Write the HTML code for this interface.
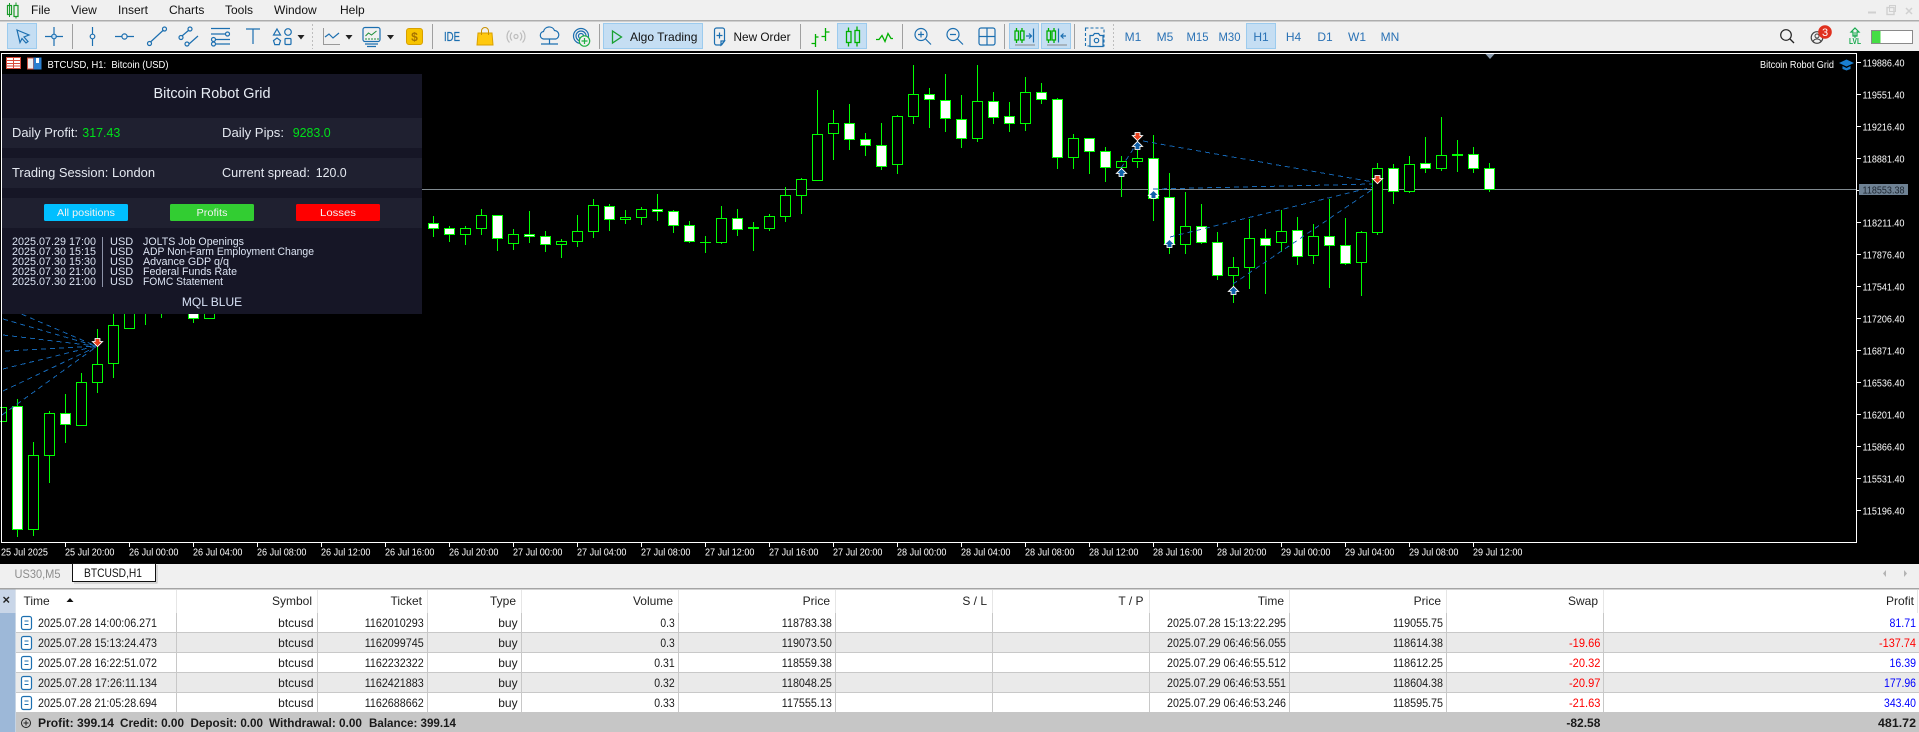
<!DOCTYPE html>
<html lang="en">
<head>
<meta charset="utf-8">
<title>BTCUSD, H1</title>
<style>
html,body{margin:0;padding:0;background:#f0f0f0;width:1919px;height:732px;overflow:hidden}
svg{display:block;font-family:"Liberation Sans",sans-serif}
.m{font-size:12px;fill:#111}
.tf{font-size:12px;fill:#2a72b5;text-anchor:middle}
.ax{font-size:10px;fill:#fff}
.tx{font-size:10px;fill:#fff}
.p{font-size:13px;fill:#e4e8f0}
.g{font-size:13px;fill:#00e01a}
.n{font-size:11px;fill:#dbe3f2}
.b{font-size:10.5px;fill:#f2f2f2;text-anchor:middle}
.h{font-size:12px;fill:#222;text-anchor:end}
.w{font-size:12px;fill:#1a1a1a;text-anchor:end}
.d{font-size:12px;fill:#1a1a1a;text-anchor:end}
.l{font-size:12px;fill:#1a1a1a}
.r{font-size:12px;fill:#f00;text-anchor:end}
.u{font-size:12px;fill:#00f;text-anchor:end}
.f{font-size:12px;font-weight:bold;fill:#1a1a1a}
.fe{font-size:12px;font-weight:bold;fill:#1a1a1a;text-anchor:end}
.i{fill:none;stroke:#1c6fb0;stroke-width:1.2}
.s{stroke:#a0a0a0;stroke-width:1}
.k{fill:#222}
.v{fill:none;stroke:#00b000;stroke-width:1.3}
.mk{paint-order:stroke;stroke:#fff;stroke-width:1.8;stroke-linejoin:miter}
</style>
</head>
<body>
<svg width="1919" height="732" viewBox="0 0 1919 732" xmlns="http://www.w3.org/2000/svg">
<defs>
<g id="dn"><path class="mk" d="M0 4L4 0H2V-3H-2V0H-4Z" fill="#e8411e"/></g>
<g id="up"><path class="mk" d="M0 -4L4 0H2V3H-2V0H-4Z" fill="#0f5fa8"/></g>
<g id="doc"><rect x="21.5" y="0" width="10" height="13" rx="2" fill="#fff" stroke="#1c6fb0" stroke-width="1.2"/><path d="M24.5 4.5h4M24.5 8h4" stroke="#1c6fb0"/></g>
</defs>
<rect width="1919" height="732" fill="#f0f0f0"/>

<!-- menu -->
<path d="M9.5 6v10M9.5 6" stroke="#1a9a2a"/><rect x="7.5" y="5.5" width="4" height="9" fill="none" stroke="#1a9a2a" stroke-width="1.2"/><rect x="14" y="5.5" width="4" height="11" fill="none" stroke="#1a9a2a" stroke-width="1.2"/><path d="M9.5 3v2.5M9.5 14.5V17M16 2.5v3M16 16.5v2" stroke="#1a9a2a"/>
<text class="m" x="31" y="14">File</text>
<text class="m" x="71" y="14">View</text>
<text class="m" x="118" y="14">Insert</text>
<text class="m" x="169" y="14">Charts</text>
<text class="m" x="225" y="14">Tools</text>
<text class="m" x="274" y="14">Window</text>
<text class="m" x="340" y="14">Help</text>
<path d="M1868 12.5h8" stroke="#d0d0d0" stroke-width="2"/><rect x="1887" y="7.5" width="7" height="7" fill="none" stroke="#d0d0d0" stroke-width="1.4"/><rect x="1889.5" y="5.5" width="6" height="6" fill="none" stroke="#d0d0d0"/><path d="M1906 8l6 6M1912 8l-6 6" stroke="#d0d0d0" stroke-width="1.5"/>
<rect x="0" y="20" width="1919" height="1.5" fill="#adadad"/>

<!-- active buttons -->
<g fill="#c5def3" stroke="#9ccbee">
<rect x="7.5" y="23.5" width="29" height="25"/>
<rect x="603.5" y="23.5" width="99" height="25"/>
<rect x="837.5" y="23.5" width="29" height="25"/>
<rect x="1009.5" y="23.5" width="29" height="25"/>
<rect x="1041.5" y="23.5" width="29" height="25"/>
<rect x="1246.5" y="23.5" width="29" height="25"/>
</g>

<!-- separators -->
<path class="s" d="M72.5 24v25M432.5 24v25M599.5 24v25M800.5 24v25M902.5 24v25M1004.5 24v25M1074.5 24v25"/>
<path d="M312.5 24v25M1113.5 24v25" stroke="#bdbdbd" stroke-dasharray="2 2"/>

<!-- drawing tools -->
<path class="i" d="M17 30l12 5-5 2 4 4.5-2 1.5-4-4.5-2 4z"/>
<path class="i" d="M54 27v19M45 36.5h18"/><circle cx="54" cy="36.5" r="2.3" fill="#c5def3" stroke="#1c6fb0" stroke-width="1.2"/>
<path class="i" d="M92.5 27v19"/><circle cx="92.5" cy="36.5" r="2.3" fill="#f0f0f0" stroke="#1c6fb0" stroke-width="1.2"/>
<path class="i" d="M115 36.5h19"/><circle cx="124.5" cy="36.5" r="2.6" fill="#f0f0f0" stroke="#1c6fb0" stroke-width="1.2"/>
<path class="i" d="M150.5 42l13-12"/><circle class="i" cx="149.5" cy="43.5" r="2"/><circle class="i" cx="164.5" cy="29" r="2"/>
<path class="i" d="M182 36l7-6M189 44l9-8"/><circle class="i" cx="181" cy="37.5" r="2"/><circle class="i" cx="190" cy="29" r="2"/><circle class="i" cx="187" cy="44" r="2"/>
<path class="i" d="M211 28.5h19M211 34h14M216 39.5h14M216 44h14"/><circle class="i" cx="227.5" cy="34" r="2"/><circle class="i" cx="213.5" cy="39.5" r="2"/><circle class="i" cx="213.5" cy="44" r="2"/>
<path class="i" d="M246 29h14M253 29v15"/>
<path class="i" d="M277 29l3.5 6h-7z"/><circle class="i" cx="288" cy="32" r="3.3"/><path class="i" d="M277 38l3.5 2.6-1.3 4h-4.4l-1.3-4z"/><rect class="i" x="285" y="38.5" width="6" height="6" rx="1"/>
<path class="k" d="M297.5 35h7l-3.5 4.5z"/>
<path d="M323.5 28v16.5H340" fill="none" stroke="#999"/><path class="i" d="M325 37l4-3 4 4 6-5"/>
<path class="k" d="M345.5 35h7l-3.5 4.5z"/>
<rect class="i" x="363" y="27.5" width="17" height="14" rx="2"/><path d="M365.5 36l3-3 3 2 5-4" fill="none" stroke="#1c8f3a"/><path d="M366 40v-2M369 40v-2M372 40v-2M375 40v-2M378 40v-2" stroke="#1c8f3a"/><path class="i" d="M365 44h13M367 46.5h9"/>
<path class="k" d="M387 35h7l-3.5 4.5z"/>
<rect x="406.5" y="28.5" width="16" height="16" rx="2.5" fill="#f7c400" stroke="#d8a000"/><text x="414.5" y="41" font-size="12" font-weight="bold" fill="#a87400" text-anchor="middle">$</text>
<text x="444" y="41" font-size="13" fill="#1c6fb0" stroke="#1c6fb0" stroke-width=".2" textLength="16" lengthAdjust="spacingAndGlyphs">IDE</text>
<path d="M478 33h14l1 12h-16z" fill="#ffc90e" stroke="#d8a000"/><path d="M481.5 35v-4a3.5 3.5 0 0 1 7 0v4" fill="none" stroke="#c89000"/>
<g fill="none" stroke="#bdbdbd" stroke-width="1.2"><circle cx="516" cy="36.5" r="2"/><path d="M512 32.5a5.5 5.5 0 0 0 0 8M520 32.5a5.5 5.5 0 0 1 0 8M509.5 30.5a8.5 8.5 0 0 0 0 12M522.5 30.5a8.5 8.5 0 0 1 0 12"/></g>
<path class="i" d="M543.5 39a3.8 3.8 0 0 1 0-7.5 5.8 5.8 0 0 1 11-1 4.4 4.4 0 0 1 1.5 8.5zM549.5 39v5M541 44h17"/>
<g class="i"><circle cx="581" cy="36" r="7.5"/><circle cx="581" cy="36" r="5"/><circle cx="581" cy="36" r="2.5"/></g><circle cx="584.5" cy="41" r="5.2" fill="#f0f0f0" stroke="#1fb042" stroke-width="1.2"/><path d="M584.5 38v6M581.5 41h6" stroke="#1fb042" stroke-width="1.2"/>
<path d="M612.5 31l9 6-9 6z" fill="none" stroke="#19a030" stroke-width="1.3"/>
<text class="m" x="630" y="41">Algo Trading</text>
<path class="i" d="M724.5 41v-11a2 2 0 0 0-2-2h-6a2 2 0 0 0-2 2v13a2 2 0 0 0 2 2h5zM724.5 41l-3.5 4v-4zM719.5 32.5v6M716.5 35.5h6"/>
<text class="m" x="733.5" y="41" textLength="57" lengthAdjust="spacingAndGlyphs">New Order</text>

<!-- chart type -->
<path class="v" d="M815.5 34v13M811.5 43.5h4M815.5 37h3M825.5 28v13M821.5 36.5h4M825.5 32h4"/>
<g class="v"><rect x="846.5" y="31.5" width="4.5" height="11"/><rect x="855" y="30.5" width="4.5" height="12"/><path d="M848.5 27.5v4M848.5 42.5v4M857 26.5v4M857 42.5v4"/></g>
<path class="v" d="M876 39.5h3l3-4 3 6 3-8 3 5h2"/>
<circle class="i" cx="921" cy="34.5" r="6"/><path class="i" d="M925.5 39l5.5 5.5M918 34.5h6M921 31.5v6"/>
<circle class="i" cx="953" cy="34.5" r="6"/><path class="i" d="M957.5 39l5.5 5.5M950 34.5h6"/>
<rect x="979" y="28" width="16" height="17" rx="2" class="i" stroke-width="1.6"/><path class="i" d="M987 28v17M979 36.5h16"/>
<g class="v"><rect x="1015" y="31" width="3.5" height="9"/><rect x="1020.5" y="31" width="3.5" height="9"/><path d="M1016.5 28v3M1016.5 40v3M1022 28v3M1022 40v3"/></g><path class="i" d="M1026 36h5M1029 33.5l2.5 2.5-2.5 2.5M1033.5 28.5v14"/><path d="M1015 45h20" stroke="#888"/>
<g class="v"><rect x="1047" y="31" width="3.5" height="9"/><rect x="1052" y="31" width="3.5" height="9"/><path d="M1048.5 28v3M1048.5 40v3M1054 28v3M1054 40v3"/></g><path class="i" d="M1058.5 28.5v14M1061 36h5M1063.5 33.5l-2.5 2.5 2.5 2.5"/><path d="M1047 45h20" stroke="#888"/>
<path d="M1085.5 28h18.5v18h-18.5z" fill="none" stroke="#1c6fb0" stroke-width="1.1" stroke-dasharray="3 2"/><path d="M1090 35.5h3l1.5-2h4l1.5 2h3v11h-13z" fill="#f0f0f0" stroke="#1c6fb0" stroke-width="1.2"/><circle class="i" cx="1096.5" cy="40.5" r="2.2"/>

<!-- timeframes -->
<text class="tf" x="1133" y="41">M1</text>
<text class="tf" x="1165" y="41">M5</text>
<text class="tf" x="1197.5" y="41" textLength="22" lengthAdjust="spacingAndGlyphs">M15</text>
<text class="tf" x="1229.5" y="41" textLength="22" lengthAdjust="spacingAndGlyphs">M30</text>
<text class="tf" x="1261" y="41">H1</text>
<text class="tf" x="1293.5" y="41">H4</text>
<text class="tf" x="1325" y="41">D1</text>
<text class="tf" x="1357" y="41">W1</text>
<text class="tf" x="1390" y="41">MN</text>

<!-- right tools -->
<circle cx="1786" cy="35" r="5.3" fill="none" stroke="#222" stroke-width="1.2"/><path d="M1790 39l4 4" stroke="#222" stroke-width="1.3"/>
<circle cx="1817" cy="37.5" r="5.8" fill="none" stroke="#444" stroke-width="1.2"/><circle cx="1817" cy="36" r="2" fill="none" stroke="#444"/><path d="M1813 41.5a4.5 4.5 0 0 1 8 0" fill="none" stroke="#444"/>
<circle cx="1825" cy="32" r="6.8" fill="#e0301e"/><text x="1825" y="36" font-size="11" fill="#fff" text-anchor="middle">3</text>
<path d="M1855 28l4 4h-2v4h-4v-4h-2z" fill="none" stroke="#13a84a" stroke-width="1.2"/><path d="M1855 32v6" stroke="#13a84a"/>
<text x="1855" y="44" font-size="8.5" font-weight="bold" fill="#13a84a" text-anchor="middle" textLength="12" lengthAdjust="spacingAndGlyphs">LVL</text>
<rect x="1871.5" y="30.5" width="41" height="13" fill="#fff" stroke="#8a8a8a"/><rect x="1872" y="31" width="8.5" height="12" fill="#44dd44"/>

<!-- chart -->
<rect x="0" y="51" width="1919" height="513" fill="#000"/>
<path d="M2 189.5H1856" stroke="#808a90"/>

<!-- wicks -->
<path stroke="#0f0" fill="none" d="M17.5 399V537M33.5 442V536M49.5 411V483M65.5 394V443M81.5 373V426M97.5 329V393M113.5 300V378M145.5 300V325M161.5 300V318M193.5 300V323M417.5 216V232M433.5 216V237M449.5 226V242M465.5 226V245M481.5 209V235M497.5 215V251M513.5 229V250M529.5 211V243M545.5 231V252M561.5 239V258M577.5 215V247M593.5 199V238M609.5 204V231M625.5 210V224M641.5 207V225M657.5 194V221M673.5 210V233M689.5 221V243M705.5 236V253M721.5 206V244M737.5 209V236M753.5 222V251M769.5 214V231M785.5 187V222M801.5 178V214M817.5 90V181M833.5 110V160M849.5 104V150M865.5 133V156M881.5 123V170M897.5 115V174M913.5 65V124M929.5 88V128M945.5 74V132M961.5 95V148M977.5 65V142M993.5 92V124M1009.5 102V132M1025.5 77V131M1041.5 83V104M1057.5 98V169M1073.5 134V169M1089.5 138V174M1105.5 147V182M1121.5 156V197M1137.5 150V168M1153.5 135V221M1169.5 173V254M1185.5 192V254M1201.5 204V244M1217.5 232V280M1233.5 257V303M1249.5 219V289M1265.5 229V294M1281.5 210V252M1297.5 217V265M1313.5 224V264M1329.5 199V288M1345.5 218V265M1361.5 231V296M1377.5 163V235M1393.5 164V204M1409.5 156V193M1425.5 137V173M1441.5 117V171M1457.5 140V172M1473.5 147V173M1489.5 163V192"/>
<!-- hollow bodies -->
<path fill="#000" stroke="#0f0" d="M-3.5 407.5h10v14h-10zM28.5 455.5h10v74h-10zM44.5 413.5h10v42h-10zM76.5 382.5h10v43h-10zM92.5 364.5h10v18h-10zM108.5 325.5h10v38h-10zM124.5 300.5h10v28h-10zM204.5 300.5h10v18h-10zM460.5 228.5h10v6h-10zM476.5 215.5h10v13h-10zM508.5 234.5h10v9h-10zM556.5 241.5h10v3h-10zM572.5 231.5h10v10h-10zM588.5 205.5h10v26h-10zM620.5 217.5h10v2h-10zM636.5 209.5h10v8h-10zM716.5 218.5h10v24h-10zM764.5 216.5h10v12h-10zM780.5 195.5h10v21h-10zM796.5 179.5h10v16h-10zM812.5 134.5h10v46h-10zM828.5 123.5h10v10h-10zM892.5 116.5h10v48h-10zM908.5 94.5h10v22h-10zM972.5 101.5h10v37h-10zM1020.5 92.5h10v31h-10zM1068.5 138.5h10v19h-10zM1116.5 161.5h10v6h-10zM1132.5 158.5h10v3h-10zM1180.5 226.5h10v18h-10zM1228.5 267.5h10v8h-10zM1244.5 238.5h10v29h-10zM1276.5 231.5h10v11h-10zM1308.5 236.5h10v19h-10zM1356.5 232.5h10v30h-10zM1372.5 168.5h10v64h-10zM1404.5 164.5h10v27h-10zM1436.5 155.5h10v13h-10z"/>
<!-- white bodies -->
<path fill="#fff" stroke="#0f0" d="M12.5 406.5h10v123h-10zM60.5 413.5h10v11h-10zM188.5 300.5h10v18h-10zM428.5 223.5h10v5h-10zM444.5 228.5h10v6h-10zM492.5 215.5h10v23h-10zM524.5 234.5h10v2h-10zM540.5 236.5h10v8h-10zM604.5 206.5h10v13h-10zM652.5 209.5h10v2h-10zM668.5 211.5h10v14h-10zM684.5 225.5h10v16h-10zM732.5 218.5h10v11h-10zM844.5 123.5h10v16h-10zM860.5 139.5h10v6h-10zM876.5 145.5h10v21h-10zM924.5 94.5h10v5h-10zM940.5 100.5h10v18h-10zM956.5 119.5h10v19h-10zM988.5 101.5h10v16h-10zM1004.5 116.5h10v7h-10zM1036.5 92.5h10v7h-10zM1052.5 99.5h10v58h-10zM1084.5 138.5h10v13h-10zM1100.5 151.5h10v16h-10zM1148.5 158.5h10v40h-10zM1164.5 197.5h10v47h-10zM1196.5 226.5h10v16h-10zM1212.5 242.5h10v33h-10zM1260.5 238.5h10v7h-10zM1292.5 230.5h10v26h-10zM1324.5 236.5h10v9h-10zM1340.5 245.5h10v18h-10zM1388.5 168.5h10v23h-10zM1420.5 163.5h10v5h-10zM1468.5 154.5h10v14h-10zM1484.5 168.5h10v21h-10z"/>
<!-- dojis -->
<path d="M700 242.5h11" stroke="#0f0"/>
<rect x="748" y="227" width="11" height="2" fill="#0f0"/>
<rect x="1452" y="154" width="11" height="2" fill="#0f0"/>

<!-- dashed trade lines -->
<g stroke="#1565b0" stroke-dasharray="5 4" fill="none" shape-rendering="crispEdges">
<path d="M5 307L96 346M3 319L96 346M3 335L96 346M5 351L96 346M3 369L96 346M3 391L96 347M2 415L96 347"/>
<path d="M1143 141L1373 182M1153 189L1373 184M1170 237L1373 187M1233 284L1373 189M1121 168L1137 143"/>
</g>
<!-- markers -->
<use href="#dn" x="97.5" y="342"/>
<use href="#dn" x="1137.5" y="136"/>
<use href="#up" x="1137.5" y="146"/>
<use href="#up" x="1121.5" y="173"/>
<use href="#up" x="1153.5" y="195"/>
<use href="#up" x="1169.5" y="244"/>
<use href="#up" x="1233.5" y="291"/>
<use href="#dn" x="1377.5" y="179"/>

<!-- frame -->
<rect x="1.5" y="53.5" width="1855" height="489" fill="none" stroke="#fff"/>
<path d="M1485.5 54h9l-4.5 5z" fill="#8a9bad"/>

<!-- chart title -->
<rect x="6.5" y="57.5" width="14" height="11" fill="#fff" stroke="#d84a3a"/><path d="M7 60.5h13M7 63.5h13M7 66h13M13.5 58v10" stroke="#d84a3a"/>
<rect x="27.5" y="58" width="6" height="11" fill="#eee" stroke="#d05040"/><rect x="34" y="58" width="7" height="11" fill="#2a7fd0" stroke="#2a7fd0"/><rect x="36" y="58" width="3" height="5" fill="#fff"/>
<text x="47.5" y="68" font-size="10.5" fill="#fff" textLength="121" lengthAdjust="spacingAndGlyphs" xml:space="preserve">BTCUSD, H1:  Bitcoin (USD)</text>
<text x="1760" y="68" font-size="10.5" fill="#fff" textLength="74" lengthAdjust="spacingAndGlyphs">Bitcoin Robot Grid</text>
<path d="M1839 63l7.5-3.5 7.5 3.5-7.5 3.5z" fill="#1a7fd0"/><path d="M1842.5 66v3l4 1.5 4-1.5v-3l-4 2z" fill="#1a7fd0"/>

<!-- panel -->
<rect x="2" y="74" width="420" height="240" fill="#161626"/>
<rect x="2" y="118" width="420" height="30" fill="#1f2030"/>
<rect x="2" y="158" width="420" height="30" fill="#1f2030"/>
<rect x="2" y="198" width="420" height="30" fill="#1f2030"/>
<text x="153.5" y="98" font-size="14.5" fill="#e8edf5" textLength="117" lengthAdjust="spacingAndGlyphs">Bitcoin Robot Grid</text>
<text class="p" x="12" y="137" textLength="66" lengthAdjust="spacingAndGlyphs">Daily Profit:</text>
<text class="g" x="82.3" y="137" textLength="38" lengthAdjust="spacingAndGlyphs">317.43</text>
<text class="p" x="222" y="137" textLength="62" lengthAdjust="spacingAndGlyphs">Daily Pips:</text>
<text class="g" x="292.7" y="137" textLength="38" lengthAdjust="spacingAndGlyphs">9283.0</text>
<text class="p" x="12" y="177" textLength="143" lengthAdjust="spacingAndGlyphs">Trading Session: London</text>
<text class="p" x="222" y="177" textLength="88" lengthAdjust="spacingAndGlyphs">Current spread:</text>
<text class="p" x="315.7" y="177" textLength="31" lengthAdjust="spacingAndGlyphs">120.0</text>
<rect x="44" y="204" width="84" height="17" rx="1.5" fill="#00bfff"/>
<rect x="170" y="204" width="84" height="17" rx="1.5" fill="#32cd32"/>
<rect x="296" y="204" width="84" height="17" rx="1.5" fill="#f00"/>
<text class="b" x="86" y="216" textLength="58" lengthAdjust="spacingAndGlyphs">All positions</text>
<text class="b" x="212" y="216" textLength="31" lengthAdjust="spacingAndGlyphs">Profits</text>
<text class="b" x="338" y="216" textLength="36" lengthAdjust="spacingAndGlyphs">Losses</text>
<path d="M102.5 237v50" stroke="#8d93a8"/>
<text class="n" x="12" y="245" textLength="84" lengthAdjust="spacingAndGlyphs">2025.07.29 17:00</text>
<text class="n" x="110" y="245">USD</text>
<text class="n" x="143" y="245" textLength="101" lengthAdjust="spacingAndGlyphs">JOLTS Job Openings</text>
<text class="n" x="12" y="255" textLength="84" lengthAdjust="spacingAndGlyphs">2025.07.30 15:15</text>
<text class="n" x="110" y="255">USD</text>
<text class="n" x="143" y="255" textLength="171" lengthAdjust="spacingAndGlyphs">ADP Non-Farm Employment Change</text>
<text class="n" x="12" y="265" textLength="84" lengthAdjust="spacingAndGlyphs">2025.07.30 15:30</text>
<text class="n" x="110" y="265">USD</text>
<text class="n" x="143" y="265" textLength="86" lengthAdjust="spacingAndGlyphs">Advance GDP q/q</text>
<text class="n" x="12" y="275" textLength="84" lengthAdjust="spacingAndGlyphs">2025.07.30 21:00</text>
<text class="n" x="110" y="275">USD</text>
<text class="n" x="143" y="275" textLength="94" lengthAdjust="spacingAndGlyphs">Federal Funds Rate</text>
<text class="n" x="12" y="285" textLength="84" lengthAdjust="spacingAndGlyphs">2025.07.30 21:00</text>
<text class="n" x="110" y="285">USD</text>
<text class="n" x="143" y="285" textLength="80" lengthAdjust="spacingAndGlyphs">FOMC Statement</text>
<text x="212" y="306" font-size="12" fill="#d8e2f6" text-anchor="middle">MQL BLUE</text>

<!-- price axis -->
<path stroke="#fff" d="M1857 62.5h4M1857 94.5h4M1857 126.5h4M1857 158.5h4M1857 190.5h2M1857 222.5h4M1857 254.5h4M1857 286.5h4M1857 318.5h4M1857 350.5h4M1857 382.5h4M1857 414.5h4M1857 446.5h4M1857 478.5h4M1857 510.5h4"/>
<text class="ax" x="1862.5" y="66.5" textLength="42" lengthAdjust="spacingAndGlyphs">119886.40</text>
<text class="ax" x="1862.5" y="98.5" textLength="42" lengthAdjust="spacingAndGlyphs">119551.40</text>
<text class="ax" x="1862.5" y="130.5" textLength="42" lengthAdjust="spacingAndGlyphs">119216.40</text>
<text class="ax" x="1862.5" y="162.5" textLength="42" lengthAdjust="spacingAndGlyphs">118881.40</text>
<rect x="1859" y="184" width="49" height="11" fill="#6f8294"/>
<text x="1862.5" y="193.5" font-size="10" fill="#1c2530" textLength="42" lengthAdjust="spacingAndGlyphs">118553.38</text>
<text class="ax" x="1862.5" y="226.5" textLength="42" lengthAdjust="spacingAndGlyphs">118211.40</text>
<text class="ax" x="1862.5" y="258.5" textLength="42" lengthAdjust="spacingAndGlyphs">117876.40</text>
<text class="ax" x="1862.5" y="290.5" textLength="42" lengthAdjust="spacingAndGlyphs">117541.40</text>
<text class="ax" x="1862.5" y="322.5" textLength="42" lengthAdjust="spacingAndGlyphs">117206.40</text>
<text class="ax" x="1862.5" y="354.5" textLength="42" lengthAdjust="spacingAndGlyphs">116871.40</text>
<text class="ax" x="1862.5" y="386.5" textLength="42" lengthAdjust="spacingAndGlyphs">116536.40</text>
<text class="ax" x="1862.5" y="418.5" textLength="42" lengthAdjust="spacingAndGlyphs">116201.40</text>
<text class="ax" x="1862.5" y="450.5" textLength="42" lengthAdjust="spacingAndGlyphs">115866.40</text>
<text class="ax" x="1862.5" y="482.5" textLength="42" lengthAdjust="spacingAndGlyphs">115531.40</text>
<text class="ax" x="1862.5" y="514.5" textLength="42" lengthAdjust="spacingAndGlyphs">115196.40</text>

<!-- time axis -->
<path stroke="#fff" d="M65.5 543v4M129.5 543v4M193.5 543v4M257.5 543v4M321.5 543v4M385.5 543v4M449.5 543v4M513.5 543v4M577.5 543v4M641.5 543v4M705.5 543v4M769.5 543v4M833.5 543v4M897.5 543v4M961.5 543v4M1025.5 543v4M1089.5 543v4M1153.5 543v4M1217.5 543v4M1281.5 543v4M1345.5 543v4M1409.5 543v4M1473.5 543v4"/>
<text class="tx" x="1" y="555.5" textLength="47" lengthAdjust="spacingAndGlyphs">25 Jul 2025</text>
<text class="tx" x="65" y="555.5" textLength="49.5" lengthAdjust="spacingAndGlyphs">25 Jul 20:00</text>
<text class="tx" x="129" y="555.5" textLength="49.5" lengthAdjust="spacingAndGlyphs">26 Jul 00:00</text>
<text class="tx" x="193" y="555.5" textLength="49.5" lengthAdjust="spacingAndGlyphs">26 Jul 04:00</text>
<text class="tx" x="257" y="555.5" textLength="49.5" lengthAdjust="spacingAndGlyphs">26 Jul 08:00</text>
<text class="tx" x="321" y="555.5" textLength="49.5" lengthAdjust="spacingAndGlyphs">26 Jul 12:00</text>
<text class="tx" x="385" y="555.5" textLength="49.5" lengthAdjust="spacingAndGlyphs">26 Jul 16:00</text>
<text class="tx" x="449" y="555.5" textLength="49.5" lengthAdjust="spacingAndGlyphs">26 Jul 20:00</text>
<text class="tx" x="513" y="555.5" textLength="49.5" lengthAdjust="spacingAndGlyphs">27 Jul 00:00</text>
<text class="tx" x="577" y="555.5" textLength="49.5" lengthAdjust="spacingAndGlyphs">27 Jul 04:00</text>
<text class="tx" x="641" y="555.5" textLength="49.5" lengthAdjust="spacingAndGlyphs">27 Jul 08:00</text>
<text class="tx" x="705" y="555.5" textLength="49.5" lengthAdjust="spacingAndGlyphs">27 Jul 12:00</text>
<text class="tx" x="769" y="555.5" textLength="49.5" lengthAdjust="spacingAndGlyphs">27 Jul 16:00</text>
<text class="tx" x="833" y="555.5" textLength="49.5" lengthAdjust="spacingAndGlyphs">27 Jul 20:00</text>
<text class="tx" x="897" y="555.5" textLength="49.5" lengthAdjust="spacingAndGlyphs">28 Jul 00:00</text>
<text class="tx" x="961" y="555.5" textLength="49.5" lengthAdjust="spacingAndGlyphs">28 Jul 04:00</text>
<text class="tx" x="1025" y="555.5" textLength="49.5" lengthAdjust="spacingAndGlyphs">28 Jul 08:00</text>
<text class="tx" x="1089" y="555.5" textLength="49.5" lengthAdjust="spacingAndGlyphs">28 Jul 12:00</text>
<text class="tx" x="1153" y="555.5" textLength="49.5" lengthAdjust="spacingAndGlyphs">28 Jul 16:00</text>
<text class="tx" x="1217" y="555.5" textLength="49.5" lengthAdjust="spacingAndGlyphs">28 Jul 20:00</text>
<text class="tx" x="1281" y="555.5" textLength="49.5" lengthAdjust="spacingAndGlyphs">29 Jul 00:00</text>
<text class="tx" x="1345" y="555.5" textLength="49.5" lengthAdjust="spacingAndGlyphs">29 Jul 04:00</text>
<text class="tx" x="1409" y="555.5" textLength="49.5" lengthAdjust="spacingAndGlyphs">29 Jul 08:00</text>
<text class="tx" x="1473" y="555.5" textLength="49.5" lengthAdjust="spacingAndGlyphs">29 Jul 12:00</text>

<!-- tabs -->
<rect x="0" y="564" width="1919" height="24" fill="#f0f0f0"/>
<text x="14.5" y="578" font-size="12" fill="#8c8c8c" textLength="46" lengthAdjust="spacingAndGlyphs">US30,M5</text>
<rect x="72.5" y="563.5" width="83" height="18" fill="#fff" stroke="#111"/><path d="M157 565v18H74" fill="none" stroke="#bbb"/>
<text x="84" y="577" font-size="12" fill="#111" textLength="58" lengthAdjust="spacingAndGlyphs">BTCUSD,H1</text>
<path d="M1886 570v7l-3-3.5zM1904 570v7l3-3.5z" fill="#b4b4b4"/>

<!-- table -->
<rect x="16" y="588" width="1903" height="144" fill="#fff"/>
<rect x="0" y="588" width="15.5" height="144" fill="#9db8d8"/>
<rect x="0" y="588" width="15.5" height="25" fill="#c9d6e8"/>
<rect x="16" y="632.5" width="1903" height="20" fill="#eaeaea"/>
<rect x="16" y="672.5" width="1903" height="20" fill="#eaeaea"/>
<rect x="0" y="588" width="1919" height="1.5" fill="#a4a4a4"/>
<path d="M3.5 597l5.5 5.5M9 597l-5.5 5.5" stroke="#222" stroke-width="1.4"/>
<path stroke="#c8c8c8" d="M16 632.5H1919M16 652.5H1919M16 672.5H1919M16 692.5H1919M176.5 613V712M317.5 613V712M427.5 613V712M521.5 613V712M678.5 613V712M835.5 613V712M992.5 613V712M1149.5 613V712M1289.5 613V712M1446.5 613V712M1603.5 613V712"/>
<path stroke="#e6e6e6" d="M176.5 590V613M317.5 590V613M427.5 590V613M521.5 590V613M678.5 590V613M835.5 590V613M992.5 590V613M1149.5 590V613M1289.5 590V613M1446.5 590V613M1603.5 590V613M1917.5 590V613"/>

<!-- header -->
<text x="23.5" y="605" font-size="12" fill="#222">Time</text>
<path d="M66.5 602l3.5-4 3.5 4z" fill="#111"/>
<text class="h" x="312" y="605">Symbol</text>
<text class="h" x="422" y="605">Ticket</text>
<text class="h" x="516" y="605">Type</text>
<text class="h" x="673" y="605">Volume</text>
<text class="h" x="830" y="605">Price</text>
<text class="h" x="987" y="605">S / L</text>
<text class="h" x="1143.5" y="605">T / P</text>
<text class="h" x="1284" y="605">Time</text>
<text class="h" x="1441" y="605">Price</text>
<text class="h" x="1598" y="605">Swap</text>
<text class="h" x="1914" y="605">Profit</text>

<!-- rows -->
<use href="#doc" y="616.5"/><use href="#doc" y="636.5"/><use href="#doc" y="656.5"/><use href="#doc" y="676.5"/><use href="#doc" y="696.5"/>

<text class="l" x="38" y="627" textLength="119" lengthAdjust="spacingAndGlyphs">2025.07.28 14:00:06.271</text>
<text class="w" x="313.5" y="627">btcusd</text>
<text class="d" x="423.7" y="627" textLength="59" lengthAdjust="spacingAndGlyphs">1162010293</text>
<text class="w" x="517.6" y="627">buy</text>
<text class="d" x="674.7" y="627" textLength="14.3" lengthAdjust="spacingAndGlyphs">0.3</text>
<text class="d" x="831.8" y="627" textLength="50" lengthAdjust="spacingAndGlyphs">118783.38</text>
<text class="d" x="1286" y="627" textLength="119" lengthAdjust="spacingAndGlyphs">2025.07.28 15:13:22.295</text>
<text class="d" x="1443" y="627" textLength="50" lengthAdjust="spacingAndGlyphs">119055.75</text>
<text class="u" x="1916" y="627" textLength="26.5" lengthAdjust="spacingAndGlyphs">81.71</text>

<text class="l" x="38" y="647" textLength="119" lengthAdjust="spacingAndGlyphs">2025.07.28 15:13:24.473</text>
<text class="w" x="313.5" y="647">btcusd</text>
<text class="d" x="423.7" y="647" textLength="59" lengthAdjust="spacingAndGlyphs">1162099745</text>
<text class="w" x="517.6" y="647">buy</text>
<text class="d" x="674.7" y="647" textLength="14.3" lengthAdjust="spacingAndGlyphs">0.3</text>
<text class="d" x="831.8" y="647" textLength="50" lengthAdjust="spacingAndGlyphs">119073.50</text>
<text class="d" x="1286" y="647" textLength="119" lengthAdjust="spacingAndGlyphs">2025.07.29 06:46:56.055</text>
<text class="d" x="1443" y="647" textLength="50" lengthAdjust="spacingAndGlyphs">118614.38</text>
<text class="r" x="1600.4" y="647" textLength="31.4" lengthAdjust="spacingAndGlyphs">-19.66</text>
<text class="r" x="1916" y="647" textLength="37" lengthAdjust="spacingAndGlyphs">-137.74</text>

<text class="l" x="38" y="667" textLength="119" lengthAdjust="spacingAndGlyphs">2025.07.28 16:22:51.072</text>
<text class="w" x="313.5" y="667">btcusd</text>
<text class="d" x="423.7" y="667" textLength="59" lengthAdjust="spacingAndGlyphs">1162232322</text>
<text class="w" x="517.6" y="667">buy</text>
<text class="d" x="674.7" y="667" textLength="20.4" lengthAdjust="spacingAndGlyphs">0.31</text>
<text class="d" x="831.8" y="667" textLength="50" lengthAdjust="spacingAndGlyphs">118559.38</text>
<text class="d" x="1286" y="667" textLength="119" lengthAdjust="spacingAndGlyphs">2025.07.29 06:46:55.512</text>
<text class="d" x="1443" y="667" textLength="50" lengthAdjust="spacingAndGlyphs">118612.25</text>
<text class="r" x="1600.4" y="667" textLength="31.4" lengthAdjust="spacingAndGlyphs">-20.32</text>
<text class="u" x="1916" y="667" textLength="26.5" lengthAdjust="spacingAndGlyphs">16.39</text>

<text class="l" x="38" y="687" textLength="119" lengthAdjust="spacingAndGlyphs">2025.07.28 17:26:11.134</text>
<text class="w" x="313.5" y="687">btcusd</text>
<text class="d" x="423.7" y="687" textLength="59" lengthAdjust="spacingAndGlyphs">1162421883</text>
<text class="w" x="517.6" y="687">buy</text>
<text class="d" x="674.7" y="687" textLength="20.4" lengthAdjust="spacingAndGlyphs">0.32</text>
<text class="d" x="831.8" y="687" textLength="50" lengthAdjust="spacingAndGlyphs">118048.25</text>
<text class="d" x="1286" y="687" textLength="119" lengthAdjust="spacingAndGlyphs">2025.07.29 06:46:53.551</text>
<text class="d" x="1443" y="687" textLength="50" lengthAdjust="spacingAndGlyphs">118604.38</text>
<text class="r" x="1600.4" y="687" textLength="31.4" lengthAdjust="spacingAndGlyphs">-20.97</text>
<text class="u" x="1916" y="687" textLength="32" lengthAdjust="spacingAndGlyphs">177.96</text>

<text class="l" x="38" y="707" textLength="119" lengthAdjust="spacingAndGlyphs">2025.07.28 21:05:28.694</text>
<text class="w" x="313.5" y="707">btcusd</text>
<text class="d" x="423.7" y="707" textLength="59" lengthAdjust="spacingAndGlyphs">1162688662</text>
<text class="w" x="517.6" y="707">buy</text>
<text class="d" x="674.7" y="707" textLength="20.4" lengthAdjust="spacingAndGlyphs">0.33</text>
<text class="d" x="831.8" y="707" textLength="50" lengthAdjust="spacingAndGlyphs">117555.13</text>
<text class="d" x="1286" y="707" textLength="119" lengthAdjust="spacingAndGlyphs">2025.07.29 06:46:53.246</text>
<text class="d" x="1443" y="707" textLength="50" lengthAdjust="spacingAndGlyphs">118595.75</text>
<text class="r" x="1600.4" y="707" textLength="31.4" lengthAdjust="spacingAndGlyphs">-21.63</text>
<text class="u" x="1916" y="707" textLength="32" lengthAdjust="spacingAndGlyphs">343.40</text>

<!-- footer -->
<rect x="16" y="712" width="1903" height="20" fill="#c6c6c6"/>
<circle cx="26" cy="723" r="4.5" fill="none" stroke="#222"/><path d="M23.5 723h5M26 720.5v5" stroke="#222"/>
<text class="f" x="38" y="727" textLength="76" lengthAdjust="spacingAndGlyphs">Profit: 399.14</text>
<text class="f" x="120" y="727" textLength="64" lengthAdjust="spacingAndGlyphs">Credit: 0.00</text>
<text class="f" x="190.5" y="727" textLength="72.5" lengthAdjust="spacingAndGlyphs">Deposit: 0.00</text>
<text class="f" x="269" y="727" textLength="93" lengthAdjust="spacingAndGlyphs">Withdrawal: 0.00</text>
<text class="f" x="369" y="727" textLength="87" lengthAdjust="spacingAndGlyphs">Balance: 399.14</text>
<text class="fe" x="1600.4" y="727" textLength="34" lengthAdjust="spacingAndGlyphs">-82.58</text>
<text class="fe" x="1916" y="727" textLength="38" lengthAdjust="spacingAndGlyphs">481.72</text>
</svg>
</body>
</html>
